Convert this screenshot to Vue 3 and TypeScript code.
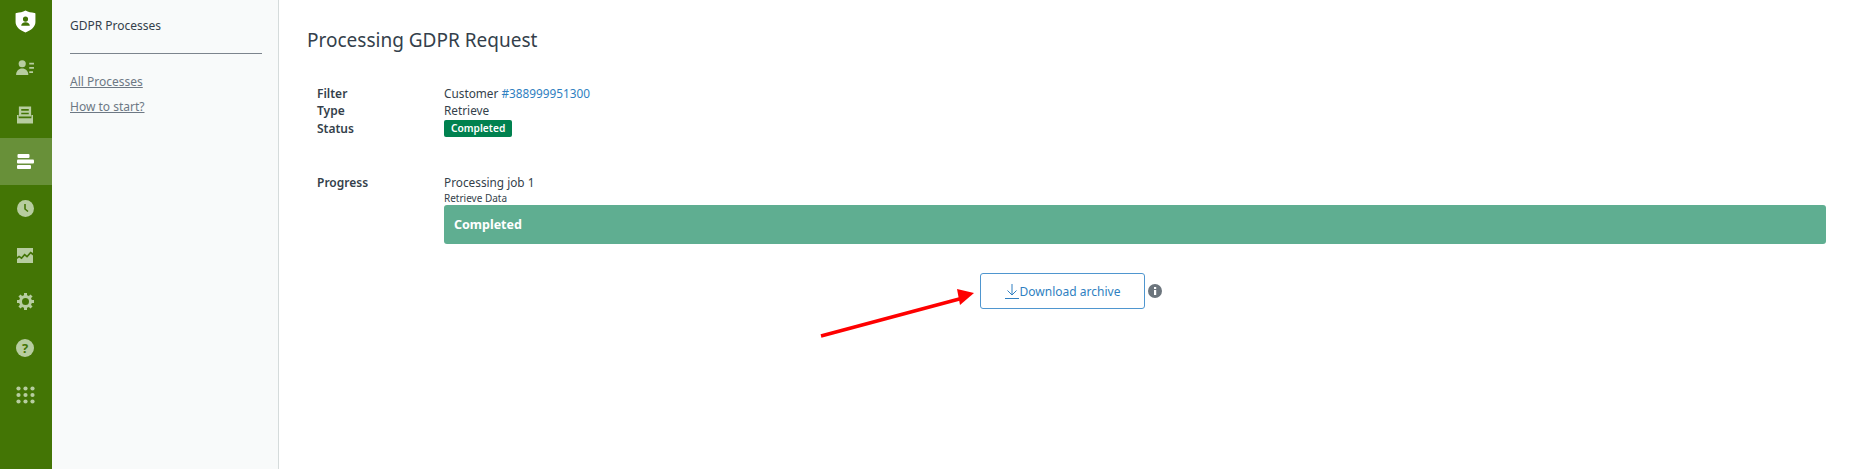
<script setup lang="ts">
interface Row { label: string }
const rows: Row[] = [{ label: 'Filter' }, { label: 'Type' }, { label: 'Status' }]
</script>

<template>
  <div class="page">
    <nav class="rail">
      <div class="logo">
        <svg width="21" height="23" viewBox="0 0 22 24" preserveAspectRatio="none">
          <path fill="#fff" d="M11 .5C14 2 17 2.700 20.500 3c.6 0 .9.500.9 1v8.500c0 5-4.400 8.500-10.400 11-6-2.500-10.400-6-10.400-11V4c0-.5.3-1 .9-1C5 2.700 8 2 11 .5z" />
          <circle cx="11" cy="9.500" r="2.700" fill="#437505" />
          <path fill="#437505" d="M6.500 16.500c0-2.600 2-3.800 4.500-3.800s4.500 1.200 4.500 3.800z" />
        </svg>
      </div>
      <div class="item">
        <svg width="19" height="16" viewBox="0 0 20 17">
          <circle cx="6.500" cy="4" r="3.800" fill="#b7cda0" />
          <path fill="#b7cda0" d="M0 16c0-4.500 2.800-7 6.500-7s6.500 2.500 6.500 7z" />
          <path fill="#b7cda0" d="M14 3h5v1.800h-5zM14 7.500h5v1.800h-5zM14 12h4v1.800h-4z" />
        </svg>
      </div>
      <div class="item">
        <svg width="16" height="18" viewBox="0 0 17 18">
          <path fill="#b7cda0" fill-rule="evenodd" d="M2 0h13v10.500H2zM4.500 2.500v2h8v-2zM4.500 6.500v1.800h8V6.500z" />
          <path fill="#b7cda0" d="M0 9h1.700v3.500h13.600V9H17v9H0z" />
        </svg>
      </div>
      <div class="item active">
        <svg width="17" height="15" viewBox="0 0 17 15">
          <rect x="0.500" y="0" width="12" height="4" rx="1" fill="#fff" />
          <rect x="0" y="5.500" width="17" height="4" rx="1" fill="#fff" />
          <rect x="0" y="11" width="14" height="4" rx="1" fill="#fff" />
        </svg>
      </div>
      <div class="item">
        <svg width="17" height="17" viewBox="0 0 17 17">
          <circle cx="8.500" cy="8.500" r="8.500" fill="#b7cda0" />
          <path d="M8 4v5l3 2.500" fill="none" stroke="#437505" stroke-width="1.600" />
        </svg>
      </div>
      <div class="item">
        <svg width="16" height="15" viewBox="0 0 16 15">
          <path fill="#b7cda0" d="M0 0h16v5l-2.500-1.500-3.500 4-2.500-2-3 3.500L2 7.500 0 9zM0 11l2.200-1.500 2.500 1.800 3-3.500 2.400 2 3.600-4L16 7.500V15H0z" />
        </svg>
      </div>
      <div class="item">
        <svg width="17" height="17" viewBox="0 0 17 17">
          <circle cx="8.500" cy="8.500" r="5" fill="none" stroke="#b7cda0" stroke-width="3" />
          <g fill="#b7cda0">
            <rect x="7" y="0" width="3" height="3" />
            <rect x="7" y="14" width="3" height="3" />
            <rect x="0" y="7" width="3" height="3" />
            <rect x="14" y="7" width="3" height="3" />
            <rect x="7" y="0" width="3" height="3" transform="rotate(45 8.500 8.500)" />
            <rect x="7" y="14" width="3" height="3" transform="rotate(45 8.500 8.500)" />
            <rect x="0" y="7" width="3" height="3" transform="rotate(45 8.500 8.500)" />
            <rect x="14" y="7" width="3" height="3" transform="rotate(45 8.500 8.500)" />
          </g>
        </svg>
      </div>
      <div class="item">
        <span class="help">?</span>
      </div>
      <div class="item">
        <svg width="19" height="18" viewBox="0 0 19 18" fill="#b7cda0">
          <circle cx="2.500" cy="2.500" r="2.100" />
          <circle cx="9.500" cy="2.500" r="2.100" />
          <circle cx="16.500" cy="2.500" r="2.100" />
          <circle cx="2.500" cy="9" r="2.100" />
          <circle cx="9.500" cy="9" r="2.100" />
          <circle cx="16.500" cy="9" r="2.100" />
          <circle cx="2.500" cy="15.500" r="2.100" />
          <circle cx="9.500" cy="15.500" r="2.100" />
          <circle cx="16.500" cy="15.500" r="2.100" />
        </svg>
      </div>
    </nav>

    <aside class="side">
      <div class="side-title">GDPR Processes</div>
      <a class="side-link first">All Processes</a>
      <a class="side-link">How to start?</a>
    </aside>

    <main class="main">
      <h1 class="title">Processing GDPR Request</h1>
      <section class="details">
        <div class="labels">
          <div v-for="r in rows" :key="r.label" class="label">{{ r.label }}</div>
        </div>
        <div class="values">
          <div class="value">Customer <a class="link">#388999951300</a></div>
          <div class="value">Retrieve</div>
          <div class="value"><span class="badge">Completed</span></div>
        </div>
      </section>
      <section class="progress">
        <div class="label prog-label">Progress</div>
        <div class="prog-body">
          <div class="job">Processing job 1</div>
          <div class="step">Retrieve Data</div>
          <div class="bar">Completed</div>
        </div>
      </section>
      <div class="actions">
        <button class="download" type="button">
          <svg width="14" height="16" viewBox="0 0 14 16" fill="none" stroke="#2f7fc1" stroke-width="1">
            <path d="M7 1v11M2.500 7.500 7 12l4.500-4.500M0 15.500h14" />
          </svg>
          <span>Download archive</span>
        </button>
        <svg class="info" width="14" height="14" viewBox="0 0 14 14">
          <circle cx="7" cy="7" r="7" fill="#6c757d" />
          <rect x="6" y="6" width="2.200" height="5" fill="#fff" />
          <rect x="6" y="3" width="2.200" height="2" fill="#fff" />
        </svg>
      </div>
    </main>

    <svg class="arrow" width="170" height="60" viewBox="0 0 170 60">
      <path d="M1 51 143 13" stroke="#fe0000" stroke-width="3.500" fill="none" />
      <path d="M154 8 137 4l3 16z" fill="#fe0000" />
    </svg>
  </div>
</template>

<style>
html, body { margin: 0; background: #fff; }
</style>

<style scoped>
.page {
  position: relative;
  display: flex;
  height: 469px;
  overflow: hidden;
  font-family: "Noto Sans", "Open Sans", sans-serif;
  font-size: 12px;
  color: #343f4b;
}
.rail {
  width: 52px;
  flex: none;
  background: #437505;
  display: flex;
  flex-direction: column;
}
.logo {
  height: 45px;
  display: flex;
  justify-content: center;
  padding: 10px 2px 0 0;
  box-sizing: border-box;
}
.item {
  height: 46.700px;
  display: flex;
  align-items: center;
  justify-content: center;
  padding-right: 2px;
  box-sizing: border-box;
}
.item.active { background: #689039; }
.help {
  width: 18px;
  height: 18px;
  border-radius: 50%;
  background: #b7cda0;
  color: #437505;
  font-size: 13px;
  font-weight: 700;
  line-height: 18px;
  text-align: center;
}
.side {
  width: 227px;
  flex: none;
  box-sizing: border-box;
  background: #f8fafa;
  border-right: 1px solid #d5dbdb;
  padding: 17px 16px 0 18px;
  display: flex;
  flex-direction: column;
}
.side-title {
  font-size: 12px;
  line-height: 18px;
  padding-bottom: 18px;
  border-bottom: 1px solid #7c848d;
}
.side-link {
  font-size: 12px;
  line-height: 18px;
  color: #6d7884;
  text-decoration: underline;
  margin-top: 7px;
}
.side-link.first { margin-top: 19px; }
.main {
  flex: 1;
  min-width: 0;
  padding: 26px 33px 0 29px;
}
.title {
  margin: 0 0 0 -1px;
  font-size: 19px;
  font-weight: 400;
  line-height: 28px;
}
.details {
  display: flex;
  margin: 31px 0 0 9px;
}
.labels { width: 127px; flex: none; }
.label {
  font-weight: 600;
  line-height: 17px;
  font-size: 12px;
}
.value {
  line-height: 17px;
  font-size: 11.800px;
}
.label:last-child,
.value:last-child { margin-top: 1px; }
.prog-label.label { margin-top: 0; }
.link { color: #2f7fc1; }
.badge {
  display: inline-block;
  background: #00814f;
  color: #fff;
  font-size: 10.200px;
  font-weight: 600;
  line-height: 17px;
  padding: 0 7px;
  border-radius: 2px;
  vertical-align: top;
}
.progress {
  display: flex;
  margin: 37px 0 0 9px;
}
.prog-label { width: 127px; flex: none; }
.prog-body { flex: 1; min-width: 0; }
.job { font-size: 11.800px; line-height: 17px; }
.step { font-size: 10px; line-height: 14px; }
.bar {
  height: 39px;
  background: #5fae91;
  border-radius: 3px;
  color: #fff;
  font-size: 12.500px;
  font-weight: 700;
  line-height: 40px;
  padding-left: 10px;
}
.actions {
  display: flex;
  align-items: center;
  justify-content: center;
  gap: 3px;
  margin-top: 29px;
  padding-left: 8px;
}
.download {
  width: 165px;
  height: 36px;
  display: flex;
  align-items: center;
  justify-content: center;
  gap: 1px;
  background: #fff;
  border: 1px solid #4f96cf;
  border-radius: 3px;
  color: #2f7fc1;
  font: inherit;
  font-size: 12px;
  padding: 0;
}
.info { flex: none; }
.arrow {
  position: absolute;
  left: 820px;
  top: 285px;
}
</style>
